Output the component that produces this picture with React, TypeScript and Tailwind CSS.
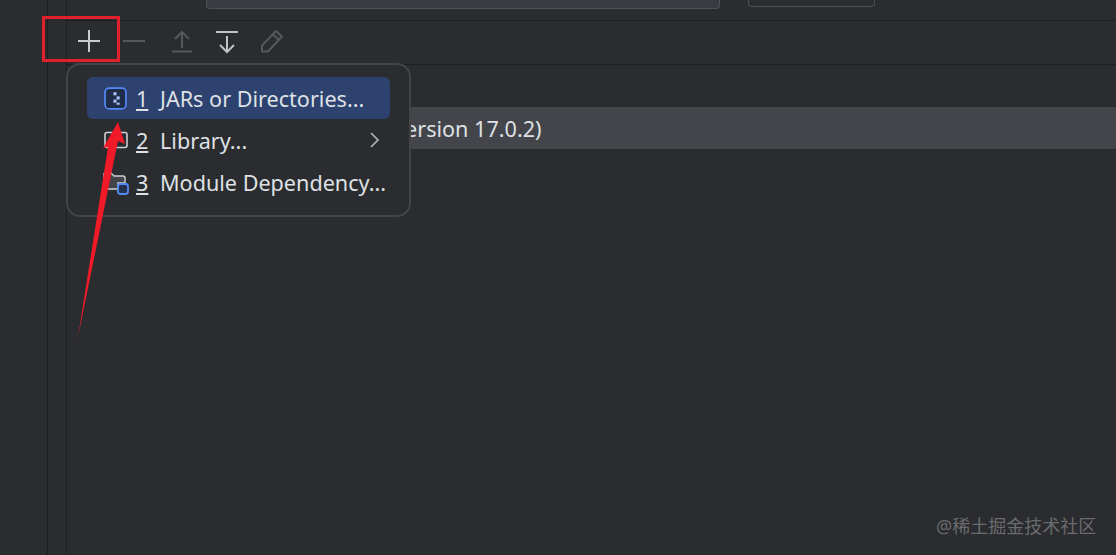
const FONT = "font-['Noto_Sans','Noto_Sans_CJK_SC',sans-serif]";

function ToolbarIcons() {
  return (
    <div className="flex items-center h-full pl-[4px] pb-[4px] gap-[9px]">
      {/* plus */}
      <svg width="36" height="36" viewBox="0 0 36 36" fill="none" stroke="#c9cbd0" strokeWidth="2">
        <path d="M18 7v22M7 18h22" />
      </svg>
      {/* minus */}
      <svg width="36" height="36" viewBox="0 0 36 36" fill="none" stroke="#55585d" strokeWidth="2">
        <path d="M7 18h22" />
      </svg>
      {/* move up */}
      <svg width="36" height="36" viewBox="0 0 36 36" fill="none" stroke="#55585d" strokeWidth="2" className="ml-[3px]">
        <path d="M18 25V9M11 16l7-7 7 7M8 28.5h20" />
      </svg>
      {/* move down */}
      <svg width="36" height="36" viewBox="0 0 36 36" fill="none" stroke="#c0c2c6" strokeWidth="2">
        <path d="M7 9h22M18 13v15.5M11 22l7 7 7-7" />
      </svg>
      {/* edit */}
      <svg width="36" height="36" viewBox="0 0 36 36" fill="none" stroke="#55585d" strokeWidth="2">
        <path d="M8 28.5v-6L22 8l6 5.5-14 15H8zM19 11.5l6 5.5" strokeLinejoin="round" />
      </svg>
    </div>
  );
}

function MenuRow({ num, label, active, chevron, icon }: { num: string; label: string; active?: boolean; chevron?: boolean; icon: React.ReactNode }) {
  return (
    <div className={`flex items-center h-[42px] pl-[17px] pr-[8px] rounded-[6px] ${active ? 'bg-[#2d426f]' : ''}`}>
      <span className="w-[23px] h-[23px] flex items-center justify-center shrink-0">{icon}</span>
      <span className="ml-[9px] w-[24px] shrink-0 pt-[2px] underline underline-offset-[2px] text-[#dfe1e5]">{num}</span>
      <span className="whitespace-nowrap pt-[2px] text-[#dfe1e5]">{label}</span>
      {chevron && (
        <svg width="12" height="18" viewBox="0 0 12 18" fill="none" stroke="#b4b6ba" strokeWidth="1.6" className="ml-auto mr-[1px]">
          <path d="M2 2l7 7-7 7" />
        </svg>
      )}
    </div>
  );
}

export default function App() {
  return (
    <div className={`relative w-[1116px] h-[555px] overflow-hidden bg-[#2a2c2f] flex ${FONT}`}>
      {/* left strips */}
      <div className="w-[48px] h-full border-r border-[#1e1f22] shrink-0" />
      <div className="w-[19px] h-full border-r border-[#1e1f22] shrink-0" />

      {/* main */}
      <div className="flex-1 flex flex-col">
        <div className="h-[21px] border-b border-[#1e1f22] flex items-start pl-[139px] shrink-0">
          <div className="w-[514px] h-[9px] bg-[#393b40] border-x border-b border-[#4e5157] rounded-b-[4px]" />
          <div className="ml-[28px] w-[127px] h-[7px] border-x border-b border-[#4e5157] rounded-b-[4px]" />
        </div>
        <div className="h-[44px] border-b border-[#1e1f22] shrink-0">
          <ToolbarIcons />
        </div>
        <div className="h-[42px] shrink-0" />
        <div className="h-[42px] bg-[#43454a] flex items-center shrink-0 pl-[274px] pt-[3px] text-[21.6px] text-[#dfe1e5]">
          <span className="whitespace-nowrap">SDK (version 17.0.2)</span>
        </div>
      </div>

      {/* popup menu */}
      <div className="absolute left-[66px] top-[63px] w-[345px] h-[154px] bg-[#2a2c2f] border-2 border-[#424448] rounded-[14px] px-[19px] py-[12px] text-[21.6px]">
        <MenuRow
          num="1"
          label="JARs or Directories..."
          active
          icon={
            <svg width="23" height="23" viewBox="0 0 22 22" fill="none">
              <rect x="1" y="1" width="20" height="20" rx="4" fill="#1f2c4a" stroke="#548af7" strokeWidth="1.6" />
              <g fill="#a8c2f5">
                <rect x="9" y="5" width="3" height="3" />
                <rect x="12" y="9" width="3" height="3" />
                <rect x="9" y="12" width="3" height="3" />
                <rect x="12" y="15" width="3" height="2" />
              </g>
            </svg>
          }
        />
        <MenuRow
          num="2"
          label="Library..."
          chevron
          icon={
            <svg width="24" height="18" viewBox="0 0 24 18" fill="none" stroke="#ced0d6" strokeWidth="1.6" className="shrink-0">
              <rect x="1" y="1.5" width="22" height="15" rx="2" />
            </svg>
          }
        />
        <MenuRow
          num="3"
          label="Module Dependency..."
          icon={
            <svg width="26" height="26" viewBox="0 0 26 26" fill="none" className="shrink-0">
              <path d="M1 18V5a1 1 0 0 1 1-1h6l3 3h9a2 2 0 0 1 2 2v5H15v6H3a2 2 0 0 1-2-2z" fill="#43454a" stroke="#ced0d6" strokeWidth="1.4" />
              <rect x="15" y="15" width="10" height="10" rx="2.5" fill="#25324d" stroke="#548af7" strokeWidth="1.8" />
            </svg>
          }
        />
      </div>

      {/* red annotation box */}
      <div className="absolute left-[42px] top-[16px] w-[78px] h-[46px] border-[3px] border-[#e0212b]" />

      {/* red annotation arrow */}
      <svg className="absolute left-[70px] top-[115px]" width="60" height="230" viewBox="0 0 60 230">
        <path d="M8 222L38 32L33 33L48 7L55 29L48 26Z" fill="#f01a28" />
      </svg>

      {/* watermark */}
      <div className="absolute left-[936px] top-[515px] text-[18px] leading-[22px] text-[#6a6b6e] whitespace-nowrap">
        @稀土掘金技术社区
      </div>
    </div>
  );
}
